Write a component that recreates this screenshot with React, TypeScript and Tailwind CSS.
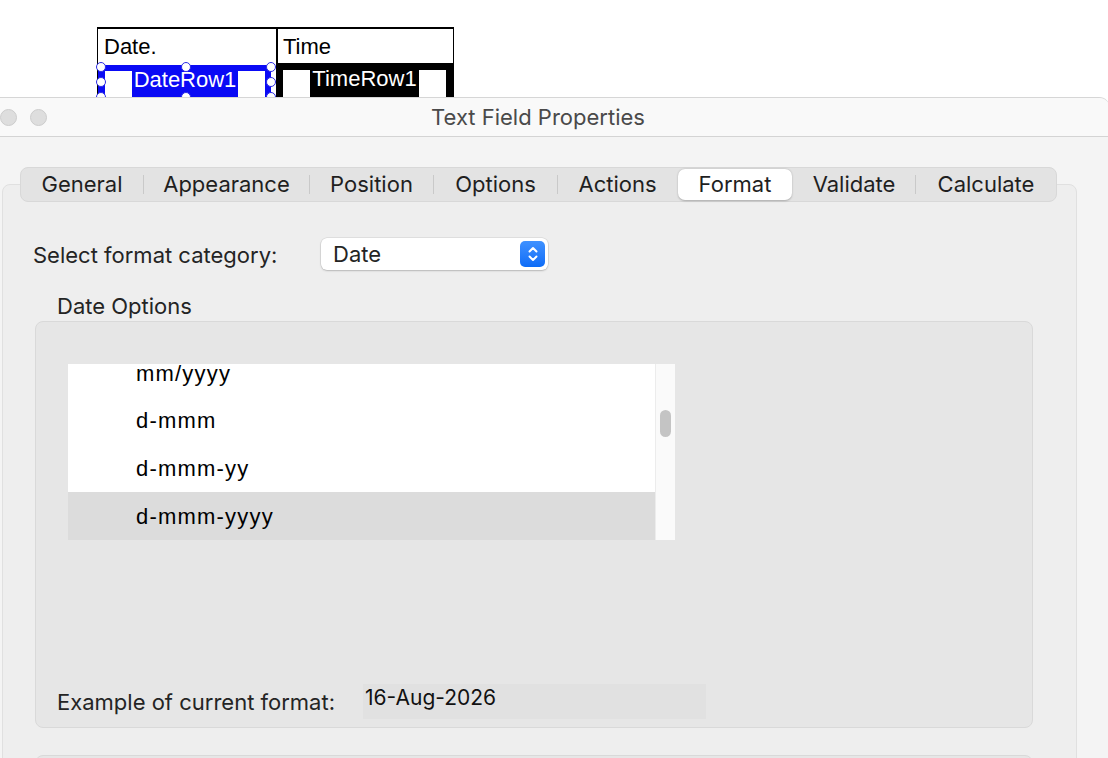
import { Fragment } from "react";

const tabs = [
  { label: "General", w: "w-[122px]" },
  { label: "Appearance", w: "w-[165px]" },
  { label: "Position", w: "w-[123px]" },
  { label: "Options", w: "w-[123px]" },
  { label: "Actions", w: "w-[119px]" },
  { label: "Format", w: "w-[114px]" },
  { label: "Validate", w: "w-[122px]" },
  { label: "Calculate", w: "w-[140px]" },
];

const ACTIVE = "Format";

const dateFormats = ["mm/yyyy", "d-mmm", "d-mmm-yy", "d-mmm-yyyy"];

const SELECTED_FORMAT = "d-mmm-yyyy";

// selection handle centres around the DateRow1 field
const handles = [
  [101, 67],
  [186, 67],
  [271, 67],
  [101, 82],
  [271, 82],
  [101, 97],
  [186, 97],
  [271, 97],
];

function DocumentTable() {
  return (
    <div className="relative h-[97px] shrink-0 overflow-hidden bg-white font-['Liberation_Sans',Arial,sans-serif] text-[22px] text-black">
      <div className="ml-[97px] mt-[27px] w-[357px] border-x-[1.5px] border-t-2 border-black">
        <div className="flex h-[35px]">
          <div className="flex w-[178px] items-center pl-[6px]">Date.</div>
          <div className="w-[2px] bg-black" />
          <div className="flex flex-1 items-center pl-[5px]">Time</div>
        </div>
        <div className="flex h-[40px]">
          {/* DateRow1 field, selected */}
          <div className="mt-[1px] flex w-[173px] bg-[#0a0af5] pt-[6px] pl-[7px]">
            <div className="h-full w-[27px] bg-white" />
            <div className="-mt-[3px] flex w-[106px] justify-center leading-[24px] text-white">DateRow1</div>
            <div className="h-full w-[27px] bg-white" />
          </div>
          <div className="w-[5px]" />
          <div className="w-[2px] bg-black" />
          {/* TimeRow1 field */}
          <div className="-mt-[1px] flex flex-1 bg-black pt-[7px] pl-[5px]">
            <div className="h-full w-[27px] bg-white" />
            <div className="-mt-[3px] flex w-[109px] justify-center leading-[24px] text-white">TimeRow1</div>
            <div className="h-full w-[27px] bg-white" />
          </div>
        </div>
      </div>
      {handles.map(([x, y], i) => (
        <span
          key={i}
          className="absolute h-[10px] w-[10px] -translate-x-1/2 -translate-y-1/2 rounded-full border-[1.5px] border-[#2a2ae6] bg-white"
          style={{ left: x, top: y }}
        />
      ))}
    </div>
  );
}

function TabBar() {
  return (
    <div className="relative z-10 ml-[54px] flex h-[35px] w-[1037px] items-center rounded-[8px] border border-[#d8d8d8] bg-[#e3e3e3] text-[22px] text-[#1f1f1f]">
      {tabs.map((t, i) => {
        const active = t.label === ACTIVE;
        const nextActive = tabs[i + 1]?.label === ACTIVE;
        return (
          <Fragment key={t.label}>
            <div className={`flex h-full ${t.w} items-center justify-center`}>
              {active ? (
                <div className="flex h-[31px] w-full items-center justify-center rounded-[7px] bg-white shadow-[0_0.5px_2px_rgba(0,0,0,0.25)]">
                  {t.label}
                </div>
              ) : (
                t.label
              )}
            </div>
            {i < tabs.length - 1 && (
              <div className={`h-[19px] w-px ${active || nextActive ? "bg-transparent" : "bg-[#c9c9c9]"}`} />
            )}
          </Fragment>
        );
      })}
    </div>
  );
}

function Stepper() {
  return (
    <div className="flex h-[26px] w-[25px] items-center justify-center rounded-[5px] bg-gradient-to-b from-[#3f91ff] to-[#0b6cf7]">
      <svg width="12" height="18" viewBox="0 0 12 18" fill="none" stroke="white" strokeWidth="2" strokeLinecap="round" strokeLinejoin="round">
        <path d="M2.5 6.5 6 3l3.5 3.5" />
        <path d="M2.5 11.5 6 15l3.5-3.5" />
      </svg>
    </div>
  );
}

function FormatList() {
  return (
    <div className="flex h-[176px] w-[607px] bg-white">
      <div className="flex-1 overflow-hidden font-['Liberation_Sans',Arial,sans-serif] text-[22px] tracking-[1.2px] text-black">
        {/* list is scrolled: the first row shows only its lower part */}
        <div className="flex h-[32px] items-start pl-[68px] leading-[20px]">{dateFormats[0]}</div>
        {dateFormats.slice(1).map((f) => (
          <div
            key={f}
            className={`flex h-[48px] items-center pl-[68px] ${f === SELECTED_FORMAT ? "bg-[#dcdcdc]" : ""}`}
          >
            {f}
          </div>
        ))}
      </div>
      <div className="flex w-[20px] justify-center border-l border-[#ececec] bg-[#fafafa] pt-[46px]">
        <div className="h-[27px] w-[11px] rounded-full bg-[#c4c4c4]" />
      </div>
    </div>
  );
}

export default function App() {
  return (
    <div className="flex h-[758px] w-[1108px] flex-col overflow-hidden bg-white font-['Inter','Noto_Sans',sans-serif] text-[#242424]">
      <DocumentTable />

      {/* dialog window */}
      <div className="-ml-[34px] flex w-[1144px] flex-1 flex-col rounded-tr-[11px] border-t border-[#d6d6d6] bg-[#f4f4f4]">
        <div className="relative flex h-[39px] shrink-0 items-center justify-center rounded-tr-[11px] border-b border-[#d4d4d4] bg-[#f9f9f9]">
          <div className="absolute left-[4px] top-[11px] flex gap-[13px]">
            <span className="h-[17px] w-[17px] rounded-full border border-[#cdcdcd] bg-[#dedede]" />
            <span className="h-[17px] w-[17px] rounded-full border border-[#cdcdcd] bg-[#dedede]" />
            <span className="h-[17px] w-[17px] rounded-full border border-[#cdcdcd] bg-[#dedede]" />
          </div>
          <span className="text-[22px] text-[#4a4a4a]">Text Field Properties</span>
        </div>

        <div className="mt-[30px]">
          <TabBar />
        </div>

        {/* tab content box */}
        <div className="-mt-[18px] ml-[36px] h-[600px] w-[1075px] rounded-[8px] border border-[#e0e0e0] bg-[#eeeeee] pl-[30px] pt-[53px] text-[22px]">
          <div className="flex h-[32px] items-center">
            <div className="w-[288px] pt-[3px]">Select format category:</div>
            <div className="flex h-[32px] w-[227px] items-center justify-between rounded-[6px] bg-white pl-[12px] pr-[3px] shadow-[0_0_0_0.5px_rgba(0,0,0,0.12),0_1px_2px_rgba(0,0,0,0.18)]">
              <span>Date</span>
              <Stepper />
            </div>
          </div>

          <div className="ml-[24px] mt-[24px] flex h-[24px] items-center">Date Options</div>

          <div className="ml-[2px] mt-[3px] flex h-[407px] w-[998px] flex-col rounded-[8px] border border-[#d9d9d9] bg-[#e6e6e6] pl-[32px] pt-[42px] pb-[8px]">
            <FormatList />
            <div className="flex-1" />
            <div className="-ml-[11px] flex h-[35px] items-center">
              <div className="w-[306px] pt-[2px]">Example of current format:</div>
              <div className="flex h-[35px] w-[343px] items-start bg-[#e1e1e1] pl-[2px] text-[21px] leading-[28px] text-[#111]">
                16-Aug-2026
              </div>
            </div>
          </div>

          <div className="ml-[2px] mt-[27px] h-[40px] w-[998px] rounded-[8px] border border-[#d9d9d9] bg-[#e6e6e6]" />
        </div>
      </div>
    </div>
  );
}
